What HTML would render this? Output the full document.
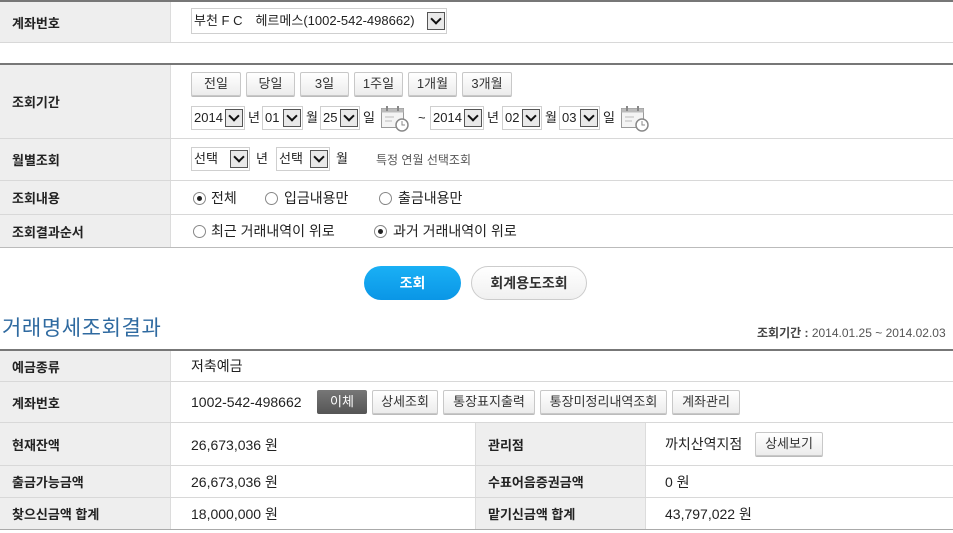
<!DOCTYPE html>
<html><head><meta charset="utf-8"><style>
*{box-sizing:border-box;margin:0;padding:0}
body{width:953px;height:533px;overflow:hidden;background:#fff;font-family:"Liberation Sans","Noto Sans CJK KR","NanumGothic",sans-serif;font-size:13px;color:#222;position:relative}
.a{position:absolute}
.lab{position:absolute;left:0;width:171px;background:#eeeeee;border-right:1px solid #dcdcdc;font-weight:bold;font-size:13px;display:flex;align-items:center;padding-left:12px;color:#222}
.lab2{position:absolute;left:475px;width:171px;background:#eeeeee;border-right:1px solid #dcdcdc;border-left:1px solid #dcdcdc;font-weight:bold;font-size:13px;display:flex;align-items:center;padding-left:12px}
.hl{position:absolute;left:0;width:953px;height:1px;background:#d8d8d8}
.dl{position:absolute;left:0;width:953px;height:2px;background:#777}
.t{position:absolute;white-space:nowrap;line-height:16px}
.sel{position:absolute;height:24px;border:1px solid #cfcfcf;background:#fff;font-size:13px;line-height:22px;padding-left:2px;white-space:nowrap}
.sel i{position:absolute;right:1px;top:2px;width:18px;height:18px;border:1px solid #555;background:#e9e9e9}
.sel i:after{content:"";position:absolute;left:4px;top:2px;width:6px;height:6px;border-right:2px solid #111;border-bottom:2px solid #111;transform:rotate(45deg)}
.btn{position:absolute;height:24px;border:1px solid #c8c8c8;border-radius:2px;background:linear-gradient(#fff,#ececec);font-size:13px;text-align:center;line-height:22px;color:#333;box-shadow:0 1px 0 #bbb}
.r{position:absolute;width:13px;height:13px;border:1px solid #888;border-radius:50%;background:#fff}
.r.on:after{content:"";position:absolute;left:3px;top:3px;width:5px;height:5px;border-radius:50%;background:#222}
.cal{position:absolute;width:30px;height:28px}
</style></head><body>
<div class="dl" style="top:0"></div>
<div class="lab" style="top:2px;height:40px">계좌번호</div>
<div class="sel" style="left:191px;top:8px;width:256px;height:26px;line-height:24px">부천 F C　헤르메스(1002-542-498662)<i style="top:3px"></i></div>
<div class="hl" style="top:42px"></div>

<div class="dl" style="top:63px"></div>
<div class="lab" style="top:65px;height:73px">조회기간</div>
<div class="btn" style="left:191px;top:72px;width:50px">전일</div>
<div class="btn" style="left:246px;top:72px;width:49px">당일</div>
<div class="btn" style="left:300px;top:72px;width:49px">3일</div>
<div class="btn" style="left:354px;top:72px;width:49px">1주일</div>
<div class="btn" style="left:408px;top:72px;width:49px">1개월</div>
<div class="btn" style="left:462px;top:72px;width:50px">3개월</div>

<div class="sel" style="left:191px;top:106px;width:54px">2014<i></i></div><div class="t" style="left:248px;top:110px">년</div>
<div class="sel" style="left:262px;top:106px;width:41px">01<i></i></div><div class="t" style="left:306px;top:110px">월</div>
<div class="sel" style="left:320px;top:106px;width:40px">25<i></i></div><div class="t" style="left:363px;top:110px">일</div>
<svg class="cal" style="left:380px;top:104px" viewBox="0 0 30 28"><rect x="1.5" y="4.5" width="22" height="19" fill="#f4f4f4" stroke="#999"/><rect x="1.5" y="4.5" width="22" height="4" fill="#bbb"/><line x1="7" y1="2" x2="7" y2="7" stroke="#888" stroke-width="2"/><line x1="18" y1="2" x2="18" y2="7" stroke="#888" stroke-width="2"/><line x1="5" y1="13" x2="14" y2="13" stroke="#bbb"/><line x1="5" y1="17" x2="12" y2="17" stroke="#bbb"/><circle cx="22" cy="21" r="6" fill="#fff" stroke="#888" stroke-width="1.5"/><path d="M22 17v4h3" stroke="#888" fill="none"/></svg>
<div class="t" style="left:418px;top:110px">~</div>
<div class="sel" style="left:430px;top:106px;width:54px">2014<i></i></div><div class="t" style="left:487px;top:110px">년</div>
<div class="sel" style="left:502px;top:106px;width:40px">02<i></i></div><div class="t" style="left:545px;top:110px">월</div>
<div class="sel" style="left:559px;top:106px;width:41px">03<i></i></div><div class="t" style="left:603px;top:110px">일</div>
<svg class="cal" style="left:620px;top:104px" viewBox="0 0 30 28"><rect x="1.5" y="4.5" width="22" height="19" fill="#f4f4f4" stroke="#999"/><rect x="1.5" y="4.5" width="22" height="4" fill="#bbb"/><line x1="7" y1="2" x2="7" y2="7" stroke="#888" stroke-width="2"/><line x1="18" y1="2" x2="18" y2="7" stroke="#888" stroke-width="2"/><line x1="5" y1="13" x2="14" y2="13" stroke="#bbb"/><line x1="5" y1="17" x2="12" y2="17" stroke="#bbb"/><circle cx="22" cy="21" r="6" fill="#fff" stroke="#888" stroke-width="1.5"/><path d="M22 17v4h3" stroke="#888" fill="none"/></svg>
<div class="hl" style="top:138px"></div>

<div class="lab" style="top:139px;height:41px">월별조회</div>
<div class="sel" style="left:191px;top:147px;width:59px">선택<i></i></div><div class="t" style="left:256px;top:151px">년</div>
<div class="sel" style="left:276px;top:147px;width:54px">선택<i></i></div><div class="t" style="left:336px;top:151px">월</div>
<div class="t" style="left:376px;top:152px;font-size:12px;color:#555">특정 연월 선택조회</div>
<div class="hl" style="top:180px"></div>

<div class="lab" style="top:181px;height:33px">조회내용</div>
<div class="r on" style="left:193px;top:192px"></div><div class="t" style="left:211px;top:190px;font-size:14px">전체</div>
<div class="r" style="left:265px;top:192px"></div><div class="t" style="left:284px;top:190px;font-size:14px">입금내용만</div>
<div class="r" style="left:379px;top:192px"></div><div class="t" style="left:398px;top:190px;font-size:14px">출금내용만</div>
<div class="hl" style="top:214px"></div>

<div class="lab" style="top:215px;height:32px">조회결과순서</div>
<div class="r" style="left:193px;top:225px"></div><div class="t" style="left:211px;top:223px;font-size:14px">최근 거래내역이 위로</div>
<div class="r on" style="left:374px;top:225px"></div><div class="t" style="left:393px;top:223px;font-size:14px">과거 거래내역이 위로</div>
<div class="hl" style="top:247px;background:#bbb"></div>

<div class="a" style="left:364px;top:266px;width:97px;height:34px;border-radius:17px;background:linear-gradient(#1ab0f5,#0a96e6);color:#fff;font-size:14px;font-weight:bold;text-align:center;line-height:34px">조회</div>
<div class="a" style="left:471px;top:266px;width:116px;height:34px;border-radius:17px;border:1px solid #ccc;background:linear-gradient(#fff,#f0f0f0);color:#333;font-size:14px;font-weight:bold;text-align:center;line-height:32px">회계용도조회</div>

<div class="t" style="left:2px;top:316px;font-size:21px;line-height:26px;color:#2f6aa0;letter-spacing:0.6px">거래명세조회결과</div>
<div class="t" style="left:757px;top:325px;font-size:12px;color:#555"><b style="color:#444">조회기간 :</b> 2014.01.25 ~ 2014.02.03</div>

<div class="dl" style="top:349px"></div>
<div class="lab" style="top:351px;height:30px">예금종류</div>
<div class="t" style="left:191px;top:358px;font-size:14px">저축예금</div>
<div class="hl" style="top:381px"></div>

<div class="lab" style="top:382px;height:40px">계좌번호</div>
<div class="t" style="left:191px;top:394px;font-size:14px">1002-542-498662</div>
<div class="a" style="left:317px;top:390px;width:50px;height:24px;background:linear-gradient(#777,#555);color:#fff;text-align:center;line-height:24px;border-radius:2px">이체</div>
<div class="btn" style="left:372px;top:390px;width:66px">상세조회</div>
<div class="btn" style="left:443px;top:390px;width:92px">통장표지출력</div>
<div class="btn" style="left:540px;top:390px;width:127px">통장미정리내역조회</div>
<div class="btn" style="left:672px;top:390px;width:68px">계좌관리</div>
<div class="hl" style="top:422px"></div>

<div class="lab" style="top:423px;height:42px">현재잔액</div>
<div class="t" style="left:191px;top:437px;font-size:14px">26,673,036 원</div>
<div class="lab2" style="top:423px;height:42px">관리점</div>
<div class="t" style="left:665px;top:436px;font-size:14px">까치산역지점</div>
<div class="btn" style="left:755px;top:432px;width:68px">상세보기</div>
<div class="hl" style="top:465px"></div>

<div class="lab" style="top:466px;height:31px">출금가능금액</div>
<div class="t" style="left:191px;top:474px;font-size:14px">26,673,036 원</div>
<div class="lab2" style="top:466px;height:31px">수표어음증권금액</div>
<div class="t" style="left:665px;top:474px;font-size:14px">0 원</div>
<div class="hl" style="top:497px"></div>

<div class="lab" style="top:498px;height:31px">찾으신금액 합계</div>
<div class="t" style="left:191px;top:506px;font-size:14px">18,000,000 원</div>
<div class="lab2" style="top:498px;height:31px">맡기신금액 합계</div>
<div class="t" style="left:665px;top:506px;font-size:14px">43,797,022 원</div>
<div class="hl" style="top:529px;background:#aaa"></div>
</body></html>
